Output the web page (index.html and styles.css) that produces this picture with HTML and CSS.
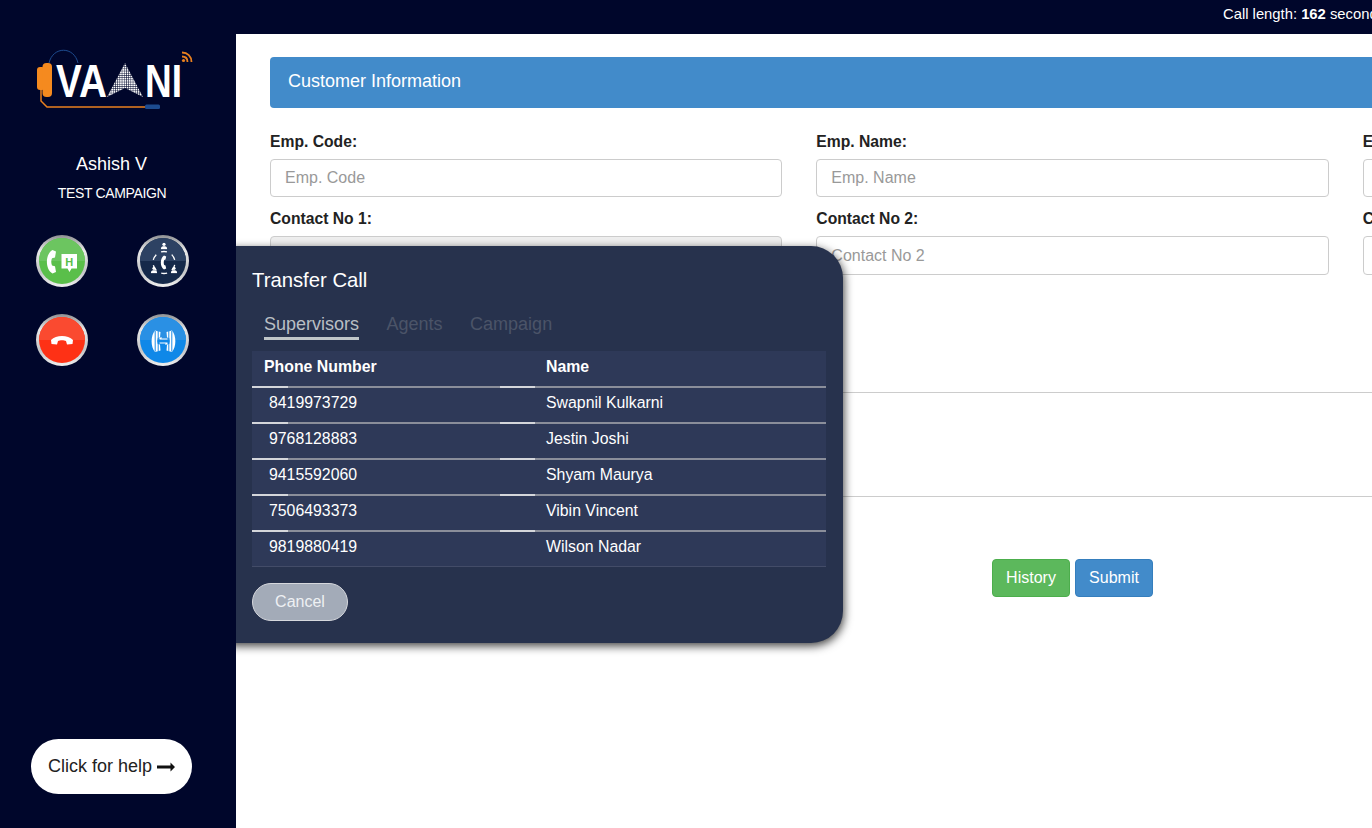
FILE: index.html
```html
<!DOCTYPE html>
<html lang="en">
<head>
<meta charset="utf-8">
<title>Vaani</title>
<link rel="stylesheet" href="styles.css">
</head>
<body>
<svg class="defs" width="0" height="0" aria-hidden="true">
  <defs>
    <linearGradient id="ring" x1="0" y1="0" x2="0" y2="1">
      <stop offset="0" stop-color="#8d8f92"/><stop offset=".3" stop-color="#e8e8e8"/>
      <stop offset=".7" stop-color="#c4c5c7"/><stop offset="1" stop-color="#f0f0f0"/>
    </linearGradient>
    <symbol id="handset" viewBox="0 0 52 52">
      <path d="M16.500 15 20 16.500 19 22.500 16 23.200C15 25.500 15 28 16 30.500L19 31.200 20 37 16.500 38.500C9 34.500 9 19 16.500 15Z" fill="#fff"/>
    </symbol>
    <symbol id="striped" viewBox="0 0 52 52">
      <path d="M18 16.500 23.500 18 23 23.500 20.500 24C20 26 20 28 20.500 30L23 30.500 23.500 36.500 18 38C13.500 33 13.500 21.500 18 16.500Z" fill="#fff"/>
      <path d="M18.200 17V37.500M21.200 17V24M21.200 30V37.500" stroke="#1a8ae6" stroke-width="1"/>
    </symbol>
    <symbol id="person" viewBox="0 0 10 10">
      <circle cx="5" cy="2.600" r="2.300" fill="#fff"/><path d="M0.500 9.500C0.500 6 3 5.500 5 5.500S9.500 6 9.500 9.500Z" fill="#fff"/>
    </symbol>
    <pattern id="dots" width="2.200" height="2.200" patternUnits="userSpaceOnUse">
      <rect width="1.700" height="1.700" fill="#fff"/>
    </pattern>
  </defs>
</svg>

<header class="topbar">
  <span>Call length: <b>162</b> seconds</span>
</header>

<div class="layout">
  <aside class="sidebar">
    <svg class="logo" viewBox="0 0 170 70" width="170" height="70" role="img" aria-label="Vaani">
      <path d="M19 18C23 1 44 1 48 18" fill="none" stroke="#1d4b8f" stroke-width="1"/>
      <rect x="7" y="22" width="8" height="23" rx="3" fill="#f58a1f"/>
      <rect x="12.500" y="18" width="9.500" height="34" rx="4" fill="#f58a1f"/>
      <path d="M11 45V56L17 62H117" fill="none" stroke="#e9801f" stroke-width="1.500"/>
      <rect x="115" y="59.500" width="15" height="4.500" rx="1.500" fill="#1d4b8f"/>
      <text class="logo-text" x="26" y="52" textLength="51" lengthAdjust="spacingAndGlyphs">VA</text>
      <path d="M95 18 113 52 95 43 77 52Z" fill="url(#dots)"/>
      <text class="logo-text" x="115" y="52" textLength="37" lengthAdjust="spacingAndGlyphs">NI</text>
      <g fill="none" stroke="#e9801f" stroke-width="1.800">
        <path d="M152 11.500C155.500 11.500 157.500 13.500 157.500 17"/>
        <path d="M152 7.500C157.500 7.500 161.500 11.500 161.500 17"/>
      </g>
      <circle cx="153.500" cy="15.500" r="1.600" fill="#e9801f"/>
    </svg>
    <div class="agent-name">Ashish V</div>
    <div class="agent-campaign">TEST CAMPAIGN</div>
    <div class="call-actions">
      <svg class="call-icon" viewBox="0 0 52 52" role="img" aria-label="Hold">
        <circle cx="26" cy="26" r="26" fill="url(#ring)"/>
        <circle cx="26" cy="26" r="23" fill="#5abf4a"/>
        <path d="M3 26a23 23 0 0 1 46 0Z" fill="#6cc560"/>
        <use href="#handset" x="0" y="0" width="52" height="52"/>
        <path d="M25.500 19H41V33.500H35.500L33.500 37 31.500 33.500H25.500Z" fill="#fff"/>
        <text class="hold-letter" x="33.300" y="30.500">H</text>
      </svg>
      <svg class="call-icon" viewBox="0 0 52 52" role="img" aria-label="Conference">
        <circle cx="26" cy="26" r="26" fill="url(#ring)"/>
        <circle cx="26" cy="26" r="23" fill="#15294a"/>
        <path d="M3 26a23 23 0 0 1 46 0Z" fill="#2d4263"/>
        <use href="#person" x="23.500" y="7.500" width="7" height="7"/>
        <use href="#person" x="13.500" y="31.500" width="7" height="7"/>
        <use href="#person" x="33.500" y="31.500" width="7" height="7"/>
        <circle cx="27" cy="27.500" r="11" fill="none" stroke="#fff" stroke-width="1.300" stroke-dasharray="6 5.500" stroke-dashoffset="9"/>
        <path d="M27 20.500 29.200 21.500 28.500 24.500 27.200 24.900C26.600 26.500 26.600 28.500 27.200 30.100L28.500 30.500 29.200 33.500 27 34.500C22.800 32 22.800 23 27 20.500Z" fill="#fff"/>
      </svg>
      <svg class="call-icon" viewBox="0 0 52 52" role="img" aria-label="Hang up">
        <circle cx="26" cy="26" r="26" fill="url(#ring)"/>
        <circle cx="26" cy="26" r="23" fill="#fe3115"/>
        <path d="M3 26a23 23 0 0 1 46 0Z" fill="#fa4a30"/>
        <path d="M15.500 30 15 26C20 20.500 32 20.500 37 26L36.500 30 31 30.500 30 27C28 26 24 26 22 27L21 30.500Z" fill="#fff"/>
      </svg>
      <svg class="call-icon" viewBox="0 0 52 52" role="img" aria-label="Transfer">
        <circle cx="26" cy="26" r="26" fill="url(#ring)"/>
        <circle cx="26" cy="26" r="23" fill="#0f88e8"/>
        <path d="M3 26a23 23 0 0 1 46 0Z" fill="#2a90e4"/>
        <use href="#striped" x="0" y="0" width="52" height="52"/>
        <use href="#striped" x="0" y="0" width="52" height="52" transform="matrix(-1 0 0 1 53 0)"/>
        <path d="M22.500 25H30.500M22.500 25l2-1.500M22.500 29H30.500M30.500 29l-2 1.500" fill="none" stroke="#fff" stroke-width="1.200"/>
      </svg>
    </div>
    <button class="help-btn" type="button">
      Click for help
      <svg class="help-arrow" viewBox="0 0 18 10" width="18" height="10" aria-hidden="true">
        <path d="M0 3.500H13.500V0.500L18 5 13.500 9.500V6.500H0Z" fill="#111"/>
      </svg>
    </button>
  </aside>

  <main class="main">
    <div class="content">
      <div class="panel-heading">Customer Information</div>
      <div class="form-grid">
        <div class="field"><label>Emp. Code:</label><input placeholder="Emp. Code"></div>
        <div class="field"><label>Emp. Name:</label><input placeholder="Emp. Name"></div>
        <div class="field"><label>Emp. Email:</label><input placeholder="Emp. Email"></div>
        <div class="field field-tall"><label>Contact No 1:</label><input class="disabled" disabled></div>
        <div class="field field-tall"><label>Contact No 2:</label><input placeholder="Contact No 2"></div>
        <div class="field field-tall"><label>Contact No 3:</label><input placeholder="Contact No 3"></div>
      </div>
      <hr class="rule rule-first">
      <hr class="rule rule-second">
      <div class="actions">
        <button class="btn btn-green" type="button">History</button>
        <button class="btn btn-blue" type="button">Submit</button>
      </div>
    </div>

    <section class="modal">
      <h2 class="modal-title">Transfer Call</h2>
      <div class="tabs">
        <span class="tab tab-active">Supervisors</span>
        <span class="tab">Agents</span>
        <span class="tab">Campaign</span>
      </div>
      <table class="transfer-table">
        <thead>
          <tr><th class="col-phone">Phone Number</th><th>Name</th></tr>
        </thead>
        <tbody>
          <tr><td class="phone">8419973729</td><td>Swapnil Kulkarni</td></tr>
          <tr><td class="phone">9768128883</td><td>Jestin Joshi</td></tr>
          <tr><td class="phone">9415592060</td><td>Shyam Maurya</td></tr>
          <tr><td class="phone">7506493373</td><td>Vibin Vincent</td></tr>
          <tr class="last"><td class="phone">9819880419</td><td>Wilson Nadar</td></tr>
        </tbody>
      </table>
      <button class="cancel-btn" type="button">Cancel</button>
    </section>
  </main>
</div>
</body>
</html>
```

FILE: styles.css
```css
* { box-sizing: border-box; }
html, body { margin: 0; height: 100%; overflow: hidden; }
body {
  font-family: "Liberation Sans", Arial, sans-serif;
  color: #222;
  background: #fff;
  display: flex;
  flex-direction: column;
}
.defs { position: absolute; }

.topbar {
  flex: none;
  height: 34px;
  background: #00062b;
  color: #fff;
  font-size: 14.8px;
  line-height: 29px;
  padding-left: 1223px;
  white-space: nowrap;
  overflow: hidden;
}

.layout { flex: 1; display: flex; min-height: 0; }

.sidebar {
  flex: none;
  width: 236px;
  background: #00062b;
  color: #fff;
  display: flex;
  flex-direction: column;
  align-items: center;
  padding: 11px 13px 34px 0;
}
.logo { display: block; margin-left: 7px; }
.logo-text { font-family: "Liberation Sans", sans-serif; font-weight: 700; font-size: 46px; fill: #fff; }
.hold-letter { font-family: "Liberation Sans", sans-serif; font-weight: 700; font-size: 11px; fill: #5abf4a; text-anchor: middle; }
.agent-name { font-size: 18px; line-height: 20px; margin-top: 39px; }
.agent-campaign { font-size: 14px; line-height: 16px; margin: 11px 0 0 1px; letter-spacing: -.35px; }
.call-actions {
  display: grid;
  grid-template-columns: 52px 52px;
  column-gap: 49px;
  row-gap: 27px;
  margin: 34px 0 0 2px;
}
.call-icon { display: block; width: 52px; height: 52px; }

.help-btn {
  margin-top: auto;
  width: 161px;
  height: 55px;
  border: 0;
  border-radius: 28px;
  background: #fff;
  color: #222;
  font: 18px "Liberation Sans", sans-serif;
  padding: 0;
  display: flex;
  align-items: center;
  justify-content: center;
  gap: 5px;
}
.help-arrow { display: block; }

.main { flex: 1; position: relative; overflow: hidden; min-width: 0; }
.content { width: 1639px; padding: 23px 0 0 34px; }

.panel-heading {
  height: 51px;
  background: #428bca;
  border-radius: 4px;
  color: #fff;
  font-size: 18px;
  line-height: 48px;
  padding-left: 18px;
}

.form-grid {
  display: grid;
  grid-template-columns: repeat(3, 1fr);
  column-gap: 34px;
  row-gap: 12px;
  margin-top: 24px;
}
.field label {
  display: block;
  font-size: 15.7px;
  font-weight: 700;
  line-height: 20px;
  margin-bottom: 7px;
  color: #222;
}
.field input {
  display: block;
  width: 100%;
  height: 38px;
  border: 1px solid #ccc;
  border-radius: 4px;
  background: #fff;
  padding: 0 14px;
  font: 16px "Liberation Sans", sans-serif;
  color: #555;
}
.field-tall input { height: 39px; }
.field input::placeholder { color: #999; opacity: 1; }
.field input.disabled { background: #eee; }

.rule { border: 0; border-top: 1px solid #ccc; margin: 0; }
.rule-first { margin-top: 117px; }
.rule-second { margin-top: 103px; }

.actions { display: flex; justify-content: center; gap: 5px; margin-top: 62px; }
.btn {
  width: 78px;
  height: 38px;
  border-radius: 4px;
  color: #fff;
  font: 16px "Liberation Sans", sans-serif;
  padding: 0;
}
.btn-green { background: #5cb85c; border: 1px solid #4cae4c; }
.btn-blue { background: #428bca; border: 1px solid #357ebd; }

.modal {
  position: absolute;
  left: -34px;
  top: 212px;
  width: 641px;
  height: 397px;
  padding: 22px 17px 0 50px;
  background: #27324d;
  border-radius: 32px;
  box-shadow: 1px 3px 10px rgba(0, 0, 0, .75);
  color: #fff;
}
.modal-title { margin: 0; font-size: 20.3px; font-weight: 400; line-height: 24px; }
.tabs { display: flex; gap: 27.5px; margin: 20px 0 0 12px; }
.tab { font-size: 18px; line-height: 25px; color: #4b5468; }
.tab-active { color: #b9bfc4; border-bottom: 3px solid #c0c6c8; }

.transfer-table {
  width: 574px;
  margin-top: 11px;
  border-collapse: collapse;
  table-layout: fixed;
  font-size: 15.85px;
}
.transfer-table tr {
  background:
    linear-gradient(90deg, #d4d6da 36px, #8a8e9a 36px, #8a8e9a 248px, #d4d6da 248px, #d4d6da 283px, #8a8e9a 283px) left bottom / 100% 2px no-repeat,
    #2e3958;
}
.transfer-table tr.last {
  background:
    linear-gradient(#434c68, #434c68) left bottom / 100% 1px no-repeat,
    #2e3958;
}
.transfer-table th,
.transfer-table td {
  padding: 5px 0 9px 12px;
  height: 36px;
  line-height: 20px;
  text-align: left;
  font-weight: 400;
  vertical-align: top;
}
.transfer-table th { font-weight: 700; height: 37px; padding-top: 6px; }
.transfer-table tr.last td { height: 35px; }
.col-phone { width: 282px; }
.transfer-table td.phone { padding-left: 17px; }

.cancel-btn {
  display: block;
  margin-top: 16px;
  width: 96px;
  height: 38px;
  border: 1px solid #d6d8dd;
  border-radius: 19px;
  background: #a3abb8;
  color: #eef0f3;
  font: 16px "Liberation Sans", sans-serif;
  padding: 0;
}
```
